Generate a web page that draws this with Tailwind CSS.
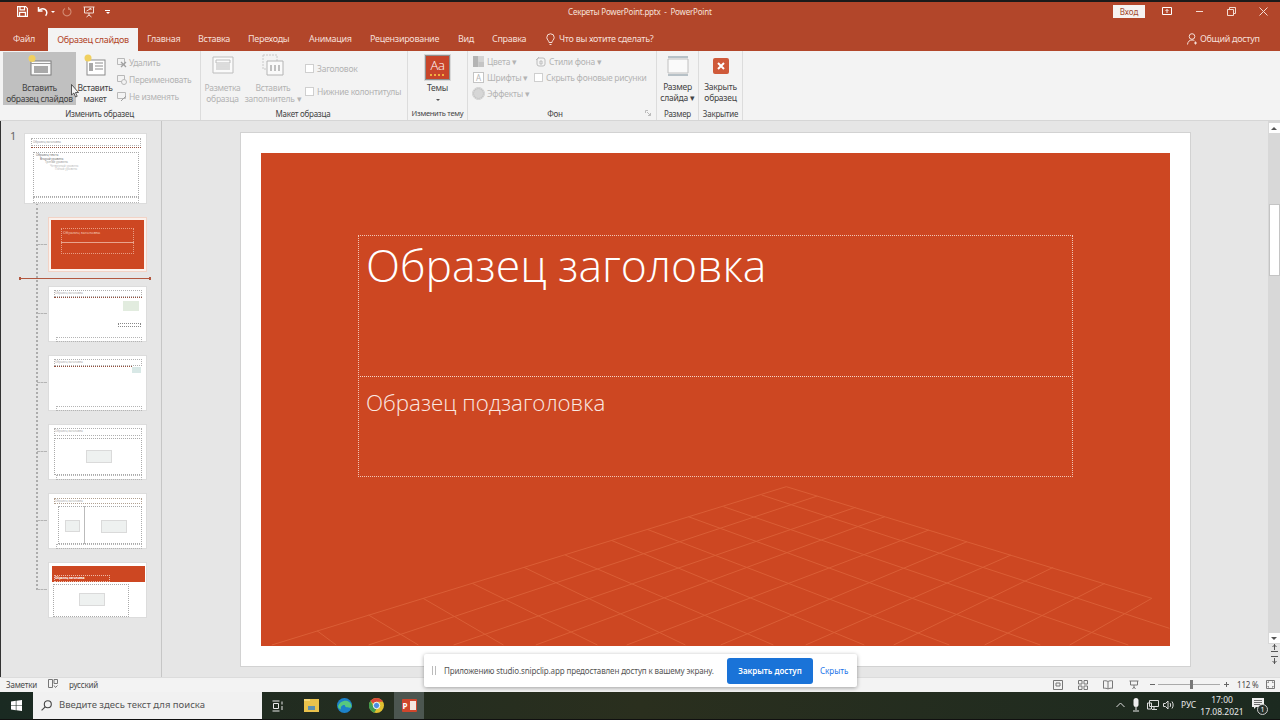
<!DOCTYPE html>
<html lang="ru">
<head>
    <meta charset="UTF-8">
    <title>Секреты PowerPoint.pptx - PowerPoint</title>
    <script src="https://cdn.jsdelivr.net/npm/@tailwindcss/browser@4"></script>
</head>
<body class="w-[1280px] h-[720px] overflow-hidden bg-[#e6e6e6] font-['Noto_Sans',sans-serif] text-[#444]">
<div class="flex flex-col h-[720px] relative">

    <!-- Title bar -->
    <header class="h-[28px] bg-[#b2462a] border-t-2 border-[#1a1a1a] flex items-center text-white relative shrink-0">
        <svg class="absolute left-[17px] top-[4px] w-[11px] h-[11px]" viewBox="0 0 11 11" fill="none" stroke="#fff" stroke-width="1.2"><path d="M.6.6h8l1.800 1.800v8H.6z"/><path d="M3 .8v3h4.500v-3M2.600 10.200V6.400h5.800v3.800"/></svg>
        <svg class="absolute left-[37px] top-[4px] w-[12px] h-[11px]" viewBox="0 0 12 11" fill="none" stroke="#fff" stroke-width="1.5"><path d="M1.500 1v4h4"/><path d="M1.700 4.800C3 2.800 6 2.200 8 3.400c2.200 1.400 2.400 4.400.6 6.400"/></svg>
        <span class="absolute left-[51px] top-[9px] w-0 h-0 border-x-[2px] border-x-transparent border-t-[2px] border-t-white"></span>
        <svg class="absolute left-[62px] top-[5px] w-[10px] h-[10px]" viewBox="0 0 10 10" fill="none" stroke="#d38a72" stroke-width="1.1"><path d="M7 1.400A4 4 0 1 1 3 1.400"/><path d="M6.600 0v2.200h2"/></svg>
        <svg class="absolute left-[83px] top-[4px] w-[12px] h-[12px]" viewBox="0 0 12 12" fill="none" stroke="#f3ddd5" stroke-width="1"><path d="M.5 1h11M1.500 1v6h9V1M6 7v2M3.500 11 6 9l2.500 2"/><path d="M3.500 5 8 2.500M6.500 2.500H8V4"/></svg>
        <span class="absolute left-[105px] top-[8px] w-[5px] h-[1px] bg-white"></span>
        <span class="absolute left-[106px] top-[10px] w-0 h-0 border-x-[2px] border-x-transparent border-t-[2px] border-t-white"></span>

        <div class="absolute left-[568px] top-[3px] text-[8px] tracking-[-0.2px] leading-[14px] text-[#f6e3dc] whitespace-nowrap">Секреты PowerPoint.pptx&nbsp; - &nbsp;PowerPoint</div>

        <div class="absolute left-[1113px] top-[3px] w-[32px] h-[13px] bg-[#f6f3f1] text-[#a2492f] text-[8px] leading-[13px] text-center">Вход</div>
        <svg class="absolute left-[1162px] top-[5px] w-[10px] h-[9px]" viewBox="0 0 10 9" fill="none" stroke="#fff"><path d="M.5.5h9v7h-9z"/><path d="M5 6V2.500M3.500 4 5 2.500 6.500 4" stroke-width=".9"/></svg>
        <span class="absolute left-[1196px] top-[9px] w-[7px] h-[1px] bg-[#f4dcd3]"></span>
        <svg class="absolute left-[1227px] top-[5px] w-[9px] h-[9px]" viewBox="0 0 9 9" fill="none" stroke="#f4dcd3"><path d="M.5 2.500h6v6h-6zM2.500 2.500V.5h6v6h-2"/></svg>
        <svg class="absolute left-[1259px] top-[5px] w-[9px] h-[9px]" viewBox="0 0 9 9" fill="none" stroke="#f4dcd3"><path d="m.5.5 8 8M8.500.5l-8 8"/></svg>
    </header>

    <!-- Tabs -->
    <nav class="h-[23px] bg-[#b2462a] flex items-end text-[9px] tracking-[-0.3px] text-[#f5dfd7] relative shrink-0 whitespace-nowrap">
        <span class="absolute left-[13px] top-[4px]">Файл</span>
        <span class="absolute left-[48px] bottom-0 w-[90px] h-[23px] bg-[#f3f3f3] text-[#b2462a] text-center leading-[23px]">Образец слайдов</span>
        <span class="absolute left-[147px] top-[4px]">Главная</span>
        <span class="absolute left-[198px] top-[4px]">Вставка</span>
        <span class="absolute left-[248px] top-[4px]">Переходы</span>
        <span class="absolute left-[309px] top-[4px]">Анимация</span>
        <span class="absolute left-[370px] top-[4px]">Рецензирование</span>
        <span class="absolute left-[458px] top-[4px]">Вид</span>
        <span class="absolute left-[492px] top-[4px]">Справка</span>
        <svg class="absolute left-[546px] top-[5px] w-[9px] h-[13px]" viewBox="0 0 9 13" fill="none" stroke="#f5dfd7"><path d="M3 9.500C3 7.500 1 7 .8 4.500a3.700 3.700 0 0 1 7.400 0C8 7 6 7.500 6 9.500zM3.500 11.500h2"/></svg>
        <span class="absolute left-[559px] top-[4px]">Что вы хотите сделать?</span>
        <svg class="absolute left-[1187px] top-[5px] w-[11px] h-[12px]" viewBox="0 0 11 12" fill="none" stroke="#f5dfd7"><circle cx="5" cy="3.500" r="2.800"/><path d="M.5 11.500C.8 8.500 2.500 7 5 7c1 0 1.800.2 2.400.7M8.500 8.500v3M7 10h3"/></svg>
        <span class="absolute left-[1200px] top-[4px]">Общий доступ</span>
    </nav>

    <!-- Ribbon -->
    <section class="h-[70px] bg-[#f3f3f3] border-b border-[#d6d6d6] flex text-[8.5px] tracking-[-0.25px] leading-[11px] shrink-0 whitespace-nowrap">

        <div class="w-[201px] shrink-0 relative flex flex-col border-r border-[#dcdcdc]">
            <div class="flex-1 flex pl-[3px] pt-[1px]">
                <div class="w-[73px] h-[53px] bg-[#c0c0c0] flex flex-col items-center text-[#3f3f3f]">
                    <svg class="w-[24px] h-[22px] mt-[2px]" viewBox="0 0 24 22" fill="none"><rect x="3" y="7" width="20" height="14" fill="#fafafa" stroke="#7c7c7c"/><rect x="6" y="12" width="14" height="7" fill="#a9a9a9"/><path d="M3 9.500h20" stroke="#9a9a9a"/><circle cx="4" cy="4.500" r="3.500" fill="#f0d060"/></svg>
                    <span class="mt-[6px] text-center">Вставить<br>образец слайдов</span>
                </div>
                <div class="w-[38px] flex flex-col items-center text-[#3f3f3f]">
                    <svg class="w-[22px] h-[22px] mt-[2px]" viewBox="0 0 22 22" fill="none"><rect x="3" y="6" width="18" height="15" fill="#fff" stroke="#8c8c8c"/><path d="M11 9h8M11 12h8M11 15h8" stroke="#8c8c8c"/><rect x="5" y="9" width="4" height="8" fill="#a8a8a8"/><circle cx="4" cy="4" r="3.500" fill="#f0d060"/></svg>
                    <span class="mt-[6px] text-center">Вставить<br>макет</span>
                </div>
                <div class="flex flex-col pl-[3px] pt-[5px] gap-[6px] text-[#b4b4b4]">
                    <div class="flex items-center gap-[2px] h-[11px]"><svg class="w-[10px] h-[10px]" viewBox="0 0 10 10" fill="none" stroke="#b8b8b8"><path d="M.5.5h7v6h-7z"/><path d="m4 4 5 5M9 4 4 9" stroke="#a0a0a0" stroke-width="1.300"/></svg>Удалить</div>
                    <div class="flex items-center gap-[2px] h-[11px]"><svg class="w-[10px] h-[10px]" viewBox="0 0 10 10" fill="none" stroke="#b8b8b8"><path d="M.5.5h7v6h-7z"/><circle cx="7" cy="7" r="2.500" fill="#f3f3f3"/></svg>Переименовать</div>
                    <div class="flex items-center gap-[2px] h-[11px]"><svg class="w-[10px] h-[10px]" viewBox="0 0 10 10" fill="none" stroke="#b8b8b8"><path d="M.5.5h8v6h-8z"/><path d="m4 9 2-2 3-3" stroke="#a0a0a0"/></svg>Не изменять</div>
                </div>
            </div>
            <div class="h-[14px] text-center text-[#444] text-[8px] leading-[15px] pr-[1px]">Изменить образец</div>
        </div>

        <div class="w-[207px] shrink-0 relative flex flex-col border-r border-[#dcdcdc] text-[#b4b4b4]">
            <div class="flex-1 flex pt-[3px]">
                <div class="w-[43px] flex flex-col items-center">
                    <svg class="w-[22px] h-[20px] mt-[2px]" viewBox="0 0 22 20" fill="#fafafa" stroke="#bdbdbd"><path d="M1 1h20v16H1z"/><path d="M4 4h14v3H4zM4 9h14M4 11h14M4 13h14" fill="none"/></svg>
                    <span class="mt-[6px] text-center">Разметка<br>образца</span>
                </div>
                <div class="w-[58px] flex flex-col items-center">
                    <svg class="w-[22px] h-[22px]" viewBox="0 0 22 22" fill="#fafafa"><path d="M1 1h14v14H1z" fill="none" stroke="#c8c8c8" stroke-dasharray="2 1"/><path d="M5 7h16v14H5z" stroke="#b4b4b4"/><path d="M8 11h2v6H8zM12 11h2v6h-2zM16 11h2v6h-2z" fill="#c0c0c0"/></svg>
                    <span class="mt-[6px] text-center">Вставить<br>заполнитель ▾</span>
                </div>
                <div class="flex flex-col gap-[12px] pl-[3px] pt-[9px]">
                    <div class="flex items-center gap-[3px] h-[11px]"><span class="w-[9px] h-[9px] bg-white border border-[#cfcfcf]"></span>Заголовок</div>
                    <div class="flex items-center gap-[3px] h-[11px]"><span class="w-[9px] h-[9px] bg-white border border-[#cfcfcf]"></span>Нижние колонтитулы</div>
                </div>
            </div>
            <div class="h-[14px] text-center text-[#444] text-[8px] leading-[15px] pr-[2px]">Макет образца</div>
        </div>

        <div class="w-[60px] shrink-0 flex flex-col border-r border-[#dcdcdc]">
            <div class="flex-1 flex flex-col items-center pt-[4px] text-[#444]">
                <div class="w-[25px] h-[25px] bg-[#c8452a] border border-[#8f8f8f] outline outline-[#d8d8d8] text-white text-[13px] leading-[18px] text-center relative font-['Open_Sans',sans-serif] font-light">Aa<span class="absolute left-[4px] bottom-[3px] w-[14px] h-[2px] border-b-2 border-dotted border-[#f0b040]"></span></div>
                <span class="mt-[2px]">Темы</span>
                <span class="mt-[6px] w-0 h-0 border-x-[2px] border-x-transparent border-t-[2px] border-t-[#555]"></span>
            </div>
            <div class="h-[14px] text-center text-[#444] leading-[15px] text-[7.5px]">Изменить тему</div>
        </div>

        <div class="w-[189px] shrink-0 flex flex-col border-r border-[#dcdcdc] text-[#b4b4b4]">
            <div class="flex-1 flex pl-[5px] pt-[4px]">
                <div class="w-[62px] flex flex-col gap-[4px]">
                    <div class="flex items-center gap-[3px] h-[12px]"><svg class="w-[11px] h-[11px]" viewBox="0 0 11 11"><rect width="5.500" height="11" fill="#b4b4b4"/><rect x="5.500" width="5.500" height="5.500" fill="#d4d4d4"/><rect x="5.500" y="5.500" width="5.500" height="5.500" fill="#c4c4c4"/></svg>Цвета ▾</div>
                    <div class="flex items-center gap-[3px] h-[12px]"><span class="w-[11px] h-[11px] border border-[#c4c4c4] bg-white text-[8px] leading-[9px] text-center">A</span>Шрифты ▾</div>
                    <div class="flex items-center gap-[3px] h-[12px]"><span class="w-[11px] h-[11px] bg-[#d6d6d6] border border-[#c4c4c4] rounded-full outline outline-[#d0d0d0]"></span>Эффекты ▾</div>
                </div>
                <div class="flex flex-col gap-[4px]">
                    <div class="flex items-center gap-[3px] h-[12px]"><svg class="w-[11px] h-[11px]" viewBox="0 0 11 11" fill="none" stroke="#bcbcbc"><rect x="2" y="2" width="8" height="8" rx="2"/><path d="M1 4 4 1M5 5h2v3H5z"/></svg>Стили фона ▾</div>
                    <div class="flex items-center gap-[3px] h-[12px] -ml-[1px]"><span class="w-[9px] h-[9px] bg-white border border-[#cfcfcf]"></span>Скрыть фоновые рисунки</div>
                </div>
            </div>
            <div class="h-[14px] text-center text-[#444] text-[8px] leading-[15px] relative pr-[14px]">Фон<svg class="absolute right-[5px] top-[4px] w-[6px] h-[6px]" viewBox="0 0 6 6" fill="none" stroke="#bbb"><path d="M.5 3V.5H3M2 2l3.500 3.500M5.500 3v2.500H3"/></svg></div>
        </div>

        <div class="w-[42px] shrink-0 flex flex-col border-r border-[#dcdcdc] text-[#444]">
            <div class="flex-1 flex flex-col items-center pt-[5px]">
                <svg class="w-[22px] h-[20px]" viewBox="0 0 22 20" fill="#fafafa" stroke="#6f8796"><path d="M1 1h20M1 19h20" stroke="#7b8e9a"/><path d="M1 3h20v14H1z" stroke="#c0c0c0"/></svg>
                <span class="mt-[5px] text-center">Размер<br>слайда ▾</span>
            </div>
            <div class="h-[14px] text-center text-[8px] leading-[15px]">Размер</div>
        </div>

        <div class="w-[44px] shrink-0 flex flex-col border-r border-[#dcdcdc] text-[#444]">
            <div class="flex-1 flex flex-col items-center pt-[7px]">
                <div class="w-[16px] h-[16px] rounded-[2px] bg-[#cf5a3a] flex items-center justify-center"><svg class="w-[8px] h-[8px]" viewBox="0 0 8 8" stroke="#fff" stroke-width="2"><path d="m1 1 6 6M7 1 1 7"/></svg></div>
                <span class="mt-[7px] text-center">Закрыть<br>образец</span>
            </div>
            <div class="h-[14px] text-center text-[8px] leading-[15px]">Закрытие</div>
        </div>
    </section>

    <!-- Workspace -->
    <main class="flex-1 flex min-h-0 border-l border-[#333]">

        <!-- Slide thumbnails -->
        <aside class="w-[161px] shrink-0 relative border-r border-[#c6c6c6] pt-[12px]">
            <span class="absolute left-[9px] top-[8px] text-[11px] leading-[14px] text-[#666]">1</span>
            <!-- master connector -->
            <div class="absolute left-[35px] top-[82px] h-[387px] border-l-2 border-dotted border-[#acacac]"></div>
            <div class="absolute left-[36px] top-[123px] w-[10px] border-t border-dashed border-[#b4b4b4]"></div>
            <div class="absolute left-[36px] top-[192px] w-[10px] border-t border-dashed border-[#b4b4b4]"></div>
            <div class="absolute left-[36px] top-[261px] w-[10px] border-t border-dashed border-[#b4b4b4]"></div>
            <div class="absolute left-[36px] top-[330px] w-[10px] border-t border-dashed border-[#b4b4b4]"></div>
            <div class="absolute left-[36px] top-[399px] w-[10px] border-t border-dashed border-[#b4b4b4]"></div>
            <div class="absolute left-[36px] top-[468px] w-[10px] border-t border-dashed border-[#b4b4b4]"></div>
            <!-- drop marker -->
            <div class="absolute left-[18px] top-[157px] w-[132px] h-[1px] bg-[#b2573f]"></div>
            <div class="absolute left-[18px] top-[156px] w-[2px] h-[3px] bg-[#b2573f]"></div>
            <div class="absolute left-[148px] top-[156px] w-[2px] h-[3px] bg-[#b2573f]"></div>

            <div class="ml-[23px] w-[123px] h-[71px] bg-white border border-[#dcdcdc] relative">
                <div class="absolute left-[6px] top-[4px] w-[110px] h-[8px] border border-dotted border-[#b0b0b0] text-[3px] tracking-normal leading-[6px] pl-[1px] text-[#999]">Образец заголовка</div>
                <div class="absolute left-[6px] top-[13px] w-[110px] border-t border-dotted border-[#96503c]"></div>
                <div class="absolute left-[8px] top-[18px] w-[106px] h-[45px] border border-dotted border-[#aaa] text-[3px] leading-[3.500px] text-[#666] pl-[2px] pt-[1px]">
                    <div>Образец текста</div><div class="pl-[4px]">Второй уровень</div><div class="pl-[9px] text-[#999]">Третий уровень</div><div class="pl-[14px] text-[#bbb]">Четвертый уровень</div><div class="pl-[19px] text-[#bbb]">Пятый уровень</div>
                </div>
                <div class="absolute left-[8px] top-[63px] w-[106px] h-[6px] border border-dotted border-[#b4b4b4]"></div>
            </div>

            <div class="ml-[47px] mt-[13px] w-[99px] h-[55px] bg-[#fbf1ec] border border-[#f2d3c6] p-[2px]">
                <div class="w-full h-full bg-[#cd4722] relative">
                    <div class="absolute left-[10px] top-[8px] w-[73px] h-[26px] border border-dotted border-[#e89d84] text-[4px] leading-[8px] text-[#f3c4b4] pl-[1px]">Образец заголовка</div>
                    <div class="absolute left-[10px] top-[22px] w-[73px] h-[1px] bg-[#e8a48e]"></div>
                </div>
            </div>

            <div class="ml-[47px] mt-[14px] w-[99px] h-[56px] bg-white border border-[#dcdcdc] relative">
                <div class="absolute left-[5px] top-[3px] w-[88px] h-[7px] border border-dotted border-[#b0b0b0] text-[3px] leading-[5px] text-[#aaa]">Образец заголовка</div>
                <div class="absolute left-[5px] top-[10px] w-[88px] border-t border-dotted border-[#96503c]"></div>
                <div class="absolute right-[7px] top-[14px] w-[16px] h-[10px] bg-[#e2ecdf]"></div>
                <div class="absolute right-[5px] top-[36px] w-[23px] h-[4px] border border-dotted border-[#888]"></div>
                <div class="absolute left-[7px] top-[50px] w-[86px] h-[5px] border border-dotted border-[#b4b4b4]"></div>
            </div>

            <div class="ml-[47px] mt-[13px] w-[99px] h-[56px] bg-white border border-[#dcdcdc] relative">
                <div class="absolute left-[5px] top-[3px] w-[88px] h-[7px] border border-dotted border-[#b0b0b0] text-[3px] leading-[5px] text-[#aaa]">Образец заголовка</div>
                <div class="absolute left-[5px] top-[10px] w-[78px] border-t border-dotted border-[#96503c]"></div>
                <div class="absolute right-[5px] top-[11px] w-[9px] h-[6px] bg-[#d8e8e6]"></div>
                <div class="absolute left-[7px] top-[50px] w-[86px] h-[5px] border border-dotted border-[#b4b4b4]"></div>
            </div>

            <div class="ml-[47px] mt-[13px] w-[99px] h-[56px] bg-white border border-[#dcdcdc] relative">
                <div class="absolute left-[5px] top-[3px] w-[88px] h-[8px] border border-dotted border-[#b0b0b0] text-[3px] leading-[5px] text-[#aaa]">Образец заголовка</div>
                <div class="absolute left-[5px] top-[13px] w-[88px] h-[37px] border border-dotted border-[#aaa]"></div>
                <div class="absolute left-[37px] top-[25px] w-[26px] h-[13px] bg-[#eef1f0] border border-[#dadada]"></div>
                <div class="absolute left-[7px] top-[50px] w-[86px] h-[5px] border border-dotted border-[#b4b4b4]"></div>
            </div>

            <div class="ml-[47px] mt-[13px] w-[99px] h-[56px] bg-white border border-[#dcdcdc] relative">
                <div class="absolute left-[5px] top-[4px] w-[88px] h-[6px] border border-dotted border-[#b0a090] text-[3px] leading-[4px] text-[#aaa]">Образец заголовка</div>
                <div class="absolute left-[9px] top-[12px] w-[84px] h-[38px] border border-dotted border-[#aaa]"></div>
                <div class="absolute left-[35px] top-[12px] w-[1px] h-[38px] bg-[#bbb]"></div>
                <div class="absolute left-[16px] top-[26px] w-[15px] h-[12px] bg-[#eef1f0] border border-[#dadada]"></div>
                <div class="absolute left-[52px] top-[26px] w-[26px] h-[13px] bg-[#eef1f0] border border-[#dadada]"></div>
                <div class="absolute left-[7px] top-[50px] w-[86px] h-[5px] border border-dotted border-[#b4b4b4]"></div>
            </div>

            <div class="ml-[47px] mt-[13px] w-[99px] h-[56px] bg-white border border-[#dcdcdc] relative">
                <div class="absolute left-[3px] top-[3px] w-[93px] h-[16px] bg-[#cd4722]"></div>
                <div class="absolute left-[5px] top-[12px] w-[56px] h-[7px] border border-dotted border-[#eebba8] text-[3px] leading-[5px] text-white font-bold">Образец заголовка</div>
                <div class="absolute left-[4px] top-[21px] w-[76px] h-[33px] border border-dotted border-[#aaa]"></div>
                <div class="absolute left-[30px] top-[30px] w-[26px] h-[13px] bg-[#eef1f0] border border-[#dadada]"></div>
            </div>
        </aside>

        <!-- Editing canvas -->
        <div class="flex-1 relative pl-[78px] pt-[11px]">
            <div class="w-[951px] h-[535px] bg-white border border-[#d2d2d2] p-[20px]">
                <div class="w-[909px] h-[493px] bg-[#cd4722] relative overflow-hidden text-white font-['Open_Sans',sans-serif] font-light">
                    <div class="absolute left-[97px] top-[82px] w-[715px] h-[142px] border border-dotted border-[#f1c6b6] pl-[7px] text-[44.500px] leading-[58px] whitespace-nowrap">Образец заголовка</div>
                    <div class="absolute left-[97px] top-[223px] w-[715px] h-[101px] border border-dotted border-[#f1c6b6] border-t-[#f5d6ca] pl-[7px] pt-[9px] text-[22.300px] leading-[34px] text-[#fbe9e2] whitespace-nowrap">Образец подзаголовка</div>
                    <svg class="absolute -left-[1px] top-[327px] w-[920px] h-[170px]" viewBox="0 0 1568 510" preserveAspectRatio="none" fill="none" stroke="#da5e36" stroke-width="1">
                        <path vector-effect="non-scaling-stroke" d="M20 495 897 20 1520 355"/>
                        <path vector-effect="non-scaling-stroke" d="M855 45 1550 445M790 80 1480 495M730 110 1330 495M660 148 1175 495M600 182 1030 495M520 225 875 495M450 262 725 495M362 310 575 495M278 355 415 495M185 405 270 495M97 452 130 495"/>
                        <path vector-effect="non-scaling-stroke" d="M950 48 185 495M1015 82 330 495M1065 110 470 495M1140 150 625 495M1205 185 785 495M1280 225 930 495M1352 262 1080 495M1440 310 1235 495M1520 355 1380 495"/>
                    </svg>
                </div>
            </div>

            <!-- Scrollbar -->
            <div class="absolute right-0 top-0 bottom-0 w-[12px] bg-[#d8d8d8] flex flex-col items-center">
                <div class="w-[11px] h-[10px] mt-[2px] bg-white flex items-center justify-center"><span class="w-0 h-0 border-x-[3px] border-x-transparent border-b-[3px] border-b-[#555]"></span></div>
                <div class="w-[11px] h-[72px] mt-[71px] bg-white border border-[#c4c4c4]"></div>
                <div class="w-[11px] h-[10px] mt-[357px] bg-white flex items-center justify-center"><span class="w-0 h-0 border-x-[3px] border-x-transparent border-t-[3px] border-t-[#555]"></span></div>
            </div>
            <div class="absolute right-0 bottom-0 w-[12px] h-[33px] bg-[#e6e6e6] flex flex-col items-center gap-[4px] pt-[0px]">
                <svg class="w-[7px] h-[8px]" viewBox="0 0 7 8" fill="none" stroke="#555"><path d="M3.500 0v6M1.500 3l2-2 2 2M0 7.500h7"/></svg>
                <svg class="w-[7px] h-[8px]" viewBox="0 0 7 8" fill="none" stroke="#555"><path d="M3.500 8V2M1.500 5l2 2 2-2M0 .5h7"/></svg>
            </div>
        </div>
    </main>

    <!-- Status bar -->
    <footer class="h-[15px] bg-[#f3f3f3] border-t border-[#dcdcdc] flex items-center text-[8px] tracking-[-0.2px] text-[#4a4a4a] relative shrink-0 whitespace-nowrap">
        <span class="absolute left-[6px] top-[1px] leading-[12px]">Заметки</span>
        <svg class="absolute left-[48px] top-[1px] w-[10px] h-[10px]" viewBox="0 0 10 10" fill="none" stroke="#777"><path d="M.5.5h4v8h-4zM6 .5h3.500v4H6zM6 6.500l1.500 2 2-2"/></svg>
        <span class="absolute left-[69px] top-[1px] leading-[12px]">русский</span>

        <svg class="absolute left-[1053px] top-[2px] w-[10px] h-[10px]" viewBox="0 0 10 10" fill="none" stroke="#777"><path d="M.5.5h9v9h-9zM3 3h4v3H3z"/></svg>
        <svg class="absolute left-[1078px] top-[2px] w-[10px] h-[10px]" viewBox="0 0 10 10" fill="none" stroke="#777"><path d="M.5.5h3.500v3.500H.5zM6 .5h3.500v3.500H6zM.5 6H4v3.500H.5zM6 6h3.500v3.500H6z"/></svg>
        <svg class="absolute left-[1103px] top-[2px] w-[10px] h-[10px]" viewBox="0 0 10 10" fill="none" stroke="#777"><path d="M5 1.500C4 .8 2 .6.500.8v7.500C2 8 4 8.300 5 9c1-.7 3-1 4.500-.7V.8C8 .6 6 .8 5 1.500zM5 1.500V9"/></svg>
        <svg class="absolute left-[1129px] top-[2px] w-[10px] h-[10px]" viewBox="0 0 10 10" fill="none" stroke="#777"><path d="M.5 1h9M1.500 1v4h7V1M5 5v2M3.500 9 5 7l1.500 2"/></svg>
        <span class="absolute left-[1150px] top-[6px] w-[5px] h-[1px] bg-[#666]"></span>
        <span class="absolute left-[1158px] top-[6px] w-[62px] h-[1px] bg-[#aaa]"></span>
        <span class="absolute left-[1190px] top-[2px] w-[3px] h-[9px] bg-[#777]"></span>
        <span class="absolute left-[1224px] top-[6px] w-[5px] h-[1px] bg-[#666]"></span>
        <span class="absolute left-[1226px] top-[4px] w-[1px] h-[5px] bg-[#666]"></span>
        <span class="absolute left-[1237px] top-[1px] leading-[12px]">112 %</span>
        <svg class="absolute left-[1266px] top-[2px] w-[9px] h-[9px]" viewBox="0 0 9 9" fill="none" stroke="#777"><path d="M.5.5h8v8h-8zM2 3V2h1M6 2h1v1M7 6v1H6M3 7H2V6"/></svg>
    </footer>

    <!-- Taskbar -->
    <div class="h-[28px] flex items-center relative shrink-0 text-white whitespace-nowrap border-b border-[#101010] bg-linear-to-r from-[#1a2a22] via-[#2a2f1e] to-[#1c2a20]">
        <div class="w-[33px] h-full flex items-center justify-center shrink-0">
            <svg class="w-[11px] h-[11px]" viewBox="0 0 11 11" fill="#fff"><path d="M0 1.500 4.800.8v4.400H0zM5.400.7 11 0v5.200H5.400zM0 5.800h4.800v4.400L0 9.500zM5.400 5.800H11V11l-5.600-.8z"/></svg>
        </div>
        <div class="w-[229px] h-full bg-[#f1f1f1] text-[#555] text-[9.500px] flex items-center shrink-0">
            <svg class="w-[11px] h-[11px] ml-[8px] mr-[7px]" viewBox="0 0 11 11" fill="none" stroke="#444" stroke-width="1.100"><circle cx="6.800" cy="4.200" r="3.500"/><path d="M4.200 6.800.6 10.400"/></svg>
            Введите здесь текст для поиска
        </div>
        <svg class="ml-[10px] w-[11px] h-[12px] shrink-0" viewBox="0 0 11 12" fill="none" stroke="#e8e8e8"><path d="M.5 1h7M.5 11h7M1.500 3.500h5v5h-5zM10 1.500v3M10 6v4" /></svg>
        <div class="ml-[21px] w-[15px] h-[13px] shrink-0 bg-[#e9c24c] relative"><span class="absolute left-0 top-0 w-[6px] h-[2px] bg-[#f5d778]"></span><span class="absolute left-[4px] bottom-[2px] w-[7px] h-[4px] bg-[#5b8fb0]"></span></div>
        <svg class="ml-[18px] w-[15px] h-[15px] shrink-0" viewBox="0 0 15 15"><circle cx="7.500" cy="7.500" r="7.500" fill="#1c82c9"/><path d="M1 9C2 4 7 1.800 11 3.200 14 4.500 15 7.500 14.500 9.500 11 10 7 9 8 7c-2-.5-5 1-4 4.500C2.500 11 1.500 10 1 9z" fill="#57c97f"/></svg>
        <svg class="ml-[17px] w-[15px] h-[15px] shrink-0" viewBox="0 0 16 16"><circle cx="8" cy="8" r="8" fill="#e0c030"/><path d="M8 0a8 8 0 0 1 6.900 4H8a4 4 0 0 0-3.500 2L1.600 3A8 8 0 0 1 8 0z" fill="#d9483b"/><path d="M1.600 3 5 9.500A4 4 0 0 0 8 12l-2.500 3.600A8 8 0 0 1 1.600 3z" fill="#3f9b4f"/><circle cx="8" cy="8" r="3.400" fill="#4a8ee0" stroke="#fff"/></svg>
        <div class="ml-[10px] w-[30px] h-full bg-[#4c5650] flex items-center justify-center shrink-0">
            <div class="w-[15px] h-[13px] bg-[#d0462c] rounded-[1px] relative text-[8px] font-bold leading-[13px] pl-[1px]">P<span class="absolute right-[1px] top-[2px] w-[6px] h-[9px] bg-[#f4e6e0]"></span></div>
        </div>

        <!-- Tray -->
        <svg class="absolute left-[1116px] top-[10px] w-[9px] h-[6px]" viewBox="0 0 9 6" fill="none" stroke="#ddd"><path d="m.5 5 4-4 4 4"/></svg>
        <svg class="absolute left-[1132px] top-[6px] w-[8px] h-[14px]" viewBox="0 0 8 14" fill="#eee"><rect x="1.500" width="5" height="9" rx="2.500"/><path d="M3.500 9h1v3h-1zM1 12.500h6v1H1z"/></svg>
        <svg class="absolute left-[1147px] top-[8px] w-[12px] h-[11px]" viewBox="0 0 12 11" fill="none" stroke="#ddd"><path d="M2.500.5h9v6h-9zM.5 3h4v6h-4zM7 7v2M5 9.500h5"/></svg>
        <svg class="absolute left-[1163px] top-[8px] w-[11px] h-[10px]" viewBox="0 0 11 10" fill="none" stroke="#ddd"><path d="M.5 3.500h2L5 1v8L2.500 6.500h-2zM7 3c.8 1 .8 3 0 4M9 1.500c1.500 2 1.500 5 0 7"/></svg>
        <span class="absolute left-[1181px] top-[6px] text-[8.500px] leading-[14px] text-[#e8e8e8]">РУС</span>
        <div class="absolute left-[1200px] top-[2px] w-[44px] text-center text-[8.500px] leading-[12px] text-[#e8e8e8]">17:00<br>17.08.2021</div>
        <svg class="absolute left-[1252px] top-[6px] w-[12px] h-[11px]" viewBox="0 0 12 11" fill="#eee"><path d="M0 0h12v9H4L2 11V9H0z"/><path d="M2 2.500h8M2 4.500h8M2 6.500h6" stroke="#333" stroke-width=".7"/></svg>
        <div class="absolute left-[1257px] top-[12px] w-[11px] h-[11px] rounded-full bg-[#26302a] border border-[#ccc] text-[7px] leading-[9px] text-center">1</div>
    </div>

    <!-- Cursor over ribbon -->
    <svg class="absolute left-[71px] top-[84px] w-[8px] h-[14px]" viewBox="0 0 8 14" fill="#f4f4f4" stroke="#333" stroke-width=".8"><path d="M.5.5v10.500l2.400-2 1.700 4 1.600-.7-1.700-3.800h3z"/></svg>

    <!-- Screen share banner -->
    <div class="absolute left-[424px] top-[654px] w-[433px] h-[33px] bg-white rounded-[2px] shadow-[0_1px_4px_rgba(0,0,0,0.35)] flex items-center text-[8px] text-[#555] whitespace-nowrap">
        <span class="ml-[8px] w-[4px] h-[9px] border-x border-[#bbb] shrink-0"></span>
        <span class="ml-[8px] w-[275px] shrink-0 tracking-[-0.13px]">Приложению studio.snipclip.app предоставлен доступ к вашему экрану.</span>
        <span class="ml-[8px] w-[86px] h-[26px] bg-[#1a73d8] rounded-[3px] text-white font-semibold text-center leading-[26px] shrink-0">Закрыть доступ</span>
        <span class="ml-[7px] text-[#1a73e8]">Скрыть</span>
    </div>
</div>
</body>
</html>
